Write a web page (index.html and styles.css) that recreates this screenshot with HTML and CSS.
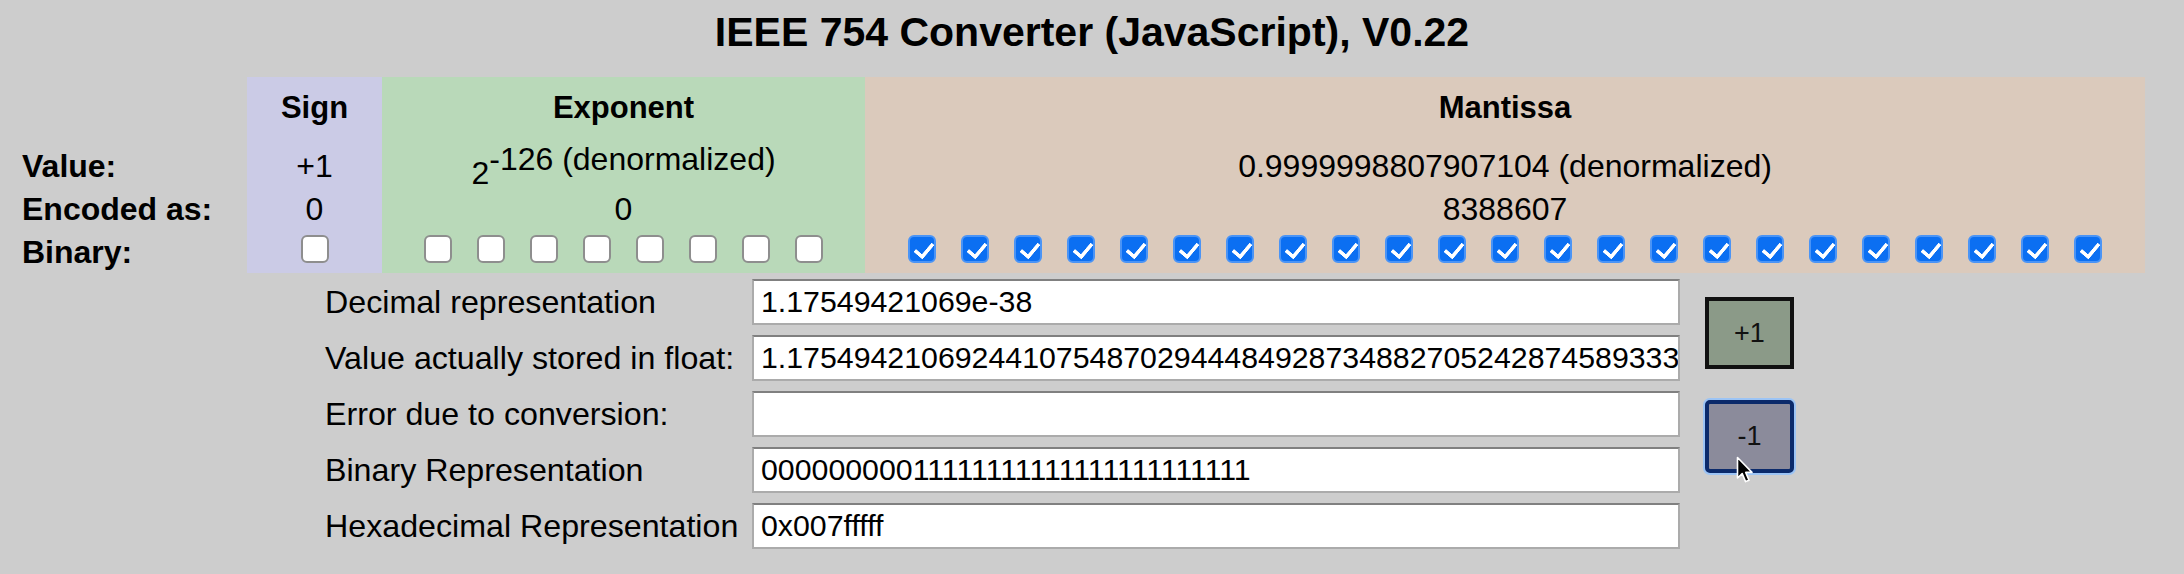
FILE: index.html
```html
<!DOCTYPE html>
<html lang="en">
<head>
<meta charset="utf-8">
<title>IEEE 754 Converter</title>
<link rel="stylesheet" href="styles.css">
</head>
<body>
<h1 class="title">IEEE 754 Converter (JavaScript), V0.22</h1>

<div class="bits">
  <div class="cell hdr"></div>
  <div class="cell hdr sign">Sign</div>
  <div class="cell hdr exp">Exponent</div>
  <div class="cell hdr man">Mantissa</div>

  <div class="cell lbl">Value:</div>
  <div class="cell sign">+1</div>
  <div class="cell exp"><span class="val">2<sup class="pow">-126 (denormalized)</sup></span></div>
  <div class="cell man">0.9999998807907104 (denormalized)</div>

  <div class="cell lbl">Encoded as:</div>
  <div class="cell sign">0</div>
  <div class="cell exp">0</div>
  <div class="cell man">8388607</div>

  <div class="cell lbl">Binary:</div>
  <div class="cell sign bin"><input class="box" type="checkbox"></div>
  <div class="cell exp bin">
    <input class="box" type="checkbox"><input class="box" type="checkbox"><input class="box" type="checkbox"><input class="box" type="checkbox"><input class="box" type="checkbox"><input class="box" type="checkbox"><input class="box" type="checkbox"><input class="box" type="checkbox">
  </div>
  <div class="cell man bin">
    <input class="box" type="checkbox" checked><input class="box" type="checkbox" checked><input class="box" type="checkbox" checked><input class="box" type="checkbox" checked><input class="box" type="checkbox" checked><input class="box" type="checkbox" checked><input class="box" type="checkbox" checked><input class="box" type="checkbox" checked><input class="box" type="checkbox" checked><input class="box" type="checkbox" checked><input class="box" type="checkbox" checked><input class="box" type="checkbox" checked><input class="box" type="checkbox" checked><input class="box" type="checkbox" checked><input class="box" type="checkbox" checked><input class="box" type="checkbox" checked><input class="box" type="checkbox" checked><input class="box" type="checkbox" checked><input class="box" type="checkbox" checked><input class="box" type="checkbox" checked><input class="box" type="checkbox" checked><input class="box" type="checkbox" checked><input class="box" type="checkbox" checked>
  </div>
</div>

<div class="lower">
  <div class="fields">
    <label class="flabel">Decimal representation</label>
    <input class="field" type="text" value="1.17549421069e-38">
    <label class="flabel">Value actually stored in float:</label>
    <input class="field" type="text" value="1.1754942106924410754870294448492873488270524287458933338571745305571e-38">
    <label class="flabel">Error due to conversion:</label>
    <input class="field" type="text" value="">
    <label class="flabel">Binary Representation</label>
    <input class="field" type="text" value="00000000011111111111111111111111">
    <label class="flabel">Hexadecimal Representation</label>
    <input class="field" type="text" value="0x007fffff">
  </div>
  <div class="buttons">
    <button class="btn plus" type="button">+1</button>
    <button class="btn minus" type="button">-1</button>
    <svg class="cursor" width="19" height="28" viewBox="0 0 19 28" aria-hidden="true">
      <path d="M1.5 1.5 L1.5 22 L6.2 17.6 L9.6 25.6 L13 24.2 L9.7 16.4 L16 16.4 Z" fill="#000" stroke="#fff" stroke-width="1.6" stroke-linejoin="round"/>
    </svg>
  </div>
</div>
</body>
</html>
```

FILE: styles.css
```css
* {
  box-sizing: border-box;
}

body {
  margin: 0;
  width: 2184px;
  height: 574px;
  overflow: hidden;
  background: #cdcdcd;
  color: #000;
  font-family: "Liberation Sans", Arial, sans-serif;
}

.title {
  margin: 0;
  padding-top: 9px;
  font-size: 41px;
  line-height: 46px;
  font-weight: bold;
  text-align: center;
}

.bits {
  display: grid;
  grid-template-columns: 225px 135px 483px 1280px;
  grid-template-rows: 68px 42px 43px 43px;
  margin-top: 22px;
  padding-left: 22px;
  font-size: 32px;
  line-height: 36px;
}

.cell {
  display: flex;
  align-items: center;
  justify-content: center;
  white-space: nowrap;
}

.lbl {
  justify-content: flex-start;
  font-weight: bold;
}

.hdr {
  align-items: flex-start;
  padding-top: 13px;
  font-size: 31px;
  font-weight: bold;
}

.sign {
  background: #cbcbe6;
}

.exp {
  background: #b9d9b9;
}

.man {
  background: #dbcabc;
}

.pow {
  font-size: inherit;
  line-height: inherit;
  vertical-align: 14px;
}

.bin {
  gap: 25px;
  padding-bottom: 5px;
}

.box {
  appearance: none;
  -webkit-appearance: none;
  flex: none;
  position: relative;
  width: 28px;
  height: 28px;
  margin: 0;
  border: 2px solid #8e8e8e;
  border-radius: 6px;
  background: #fff;
}

.box:checked {
  background: #0b6ff2;
  border-color: #4a94f6;
}

.box:checked::after {
  content: "";
  position: absolute;
  left: 8px;
  top: 2px;
  width: 8px;
  height: 15px;
  border: solid #fff;
  border-width: 0 4.5px 4.5px 0;
  border-radius: 1px;
  transform: rotate(40deg);
}

.lower {
  display: flex;
  align-items: flex-start;
  margin-top: 6px;
  padding-left: 325px;
}

.fields {
  display: grid;
  grid-template-columns: 427px 928px;
  row-gap: 10px;
  align-items: center;
}

.flabel {
  font-size: 32.2px;
  line-height: 36px;
  white-space: nowrap;
}

.field {
  width: 928px;
  height: 46px;
  margin: 0;
  padding: 0 0 0 7px;
  border: 2px solid #ababab;
  border-top-color: #808080;
  background: #fff;
  color: #000;
  font-family: "Liberation Sans", Arial, sans-serif;
  font-size: 30.3px;
  outline: none;
}

.buttons {
  position: relative;
  display: flex;
  flex-direction: column;
  gap: 31px;
  margin-left: 25px;
  padding-top: 18px;
}

.btn {
  width: 89px;
  height: 72px;
  margin: 0;
  padding: 0;
  border: 4px solid #111;
  background: #8b9a88;
  color: #111;
  font-family: "Liberation Sans", Arial, sans-serif;
  font-size: 27px;
}

.btn.minus {
  height: 73px;
  background: #8b8b9b;
  border-color: #0b2a6b;
  border-radius: 5px;
  box-shadow: 0 0 0 2px #9cc4f5;
}

.cursor {
  position: absolute;
  left: 31px;
  top: 177px;
}
```
